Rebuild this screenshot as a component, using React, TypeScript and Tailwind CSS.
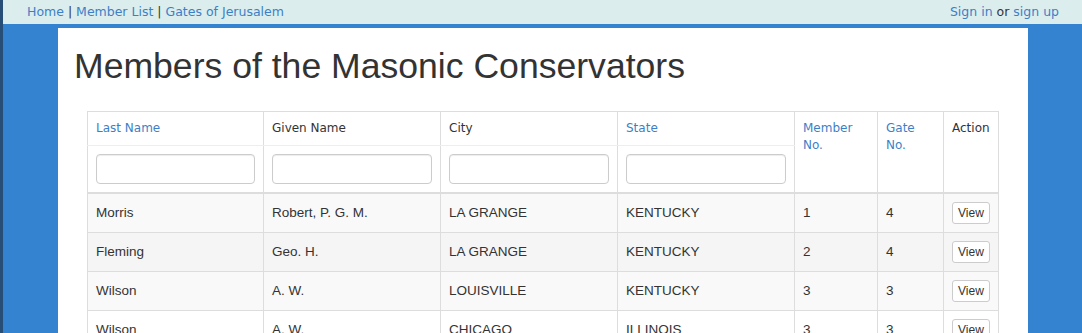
import React from 'react';

const members = [
  { last: 'Morris', given: 'Robert, P. G. M.', city: 'LA GRANGE', state: 'KENTUCKY', no: '1', gate: '4' },
  { last: 'Fleming', given: 'Geo. H.', city: 'LA GRANGE', state: 'KENTUCKY', no: '2', gate: '4' },
  { last: 'Wilson', given: 'A. W.', city: 'LOUISVILLE', state: 'KENTUCKY', no: '3', gate: '3' },
  { last: 'Wilson', given: 'A. W.', city: 'CHICAGO', state: 'ILLINOIS', no: '3', gate: '3' },
];

const rowBg = ['bg-[#f9f9f9]', 'bg-[#f5f5f5]', 'bg-[#f9f9f9]', 'bg-white'];

function FilterInput() {
  return <input type="text" className="block w-full h-[30px] rounded-[4px] border border-[#ccc] bg-white shadow-[inset_0_1px_1px_rgba(0,0,0,0.075)]" />;
}

export default function App() {
  return (
    <div className="min-h-[333px] bg-[#3483d0] border-l-[3px] border-[#274e76] font-['Liberation_Sans',Arial,sans-serif]">
      <nav className="h-6 bg-[#dbeded] flex items-center justify-between pl-6 pr-[23px] font-['DejaVu_Sans',sans-serif] text-[12.5px] text-[#333]">
        <div>
          <a className="text-[#3d7fc6]">Home</a> | <a className="text-[#3d7fc6]">Member List</a> |{' '}
          <a className="text-[#3d7fc6]">Gates of Jerusalem</a>
        </div>
        <div>
          <a className="text-[#3d7fc6]">Sign in</a> or <a className="text-[#3d7fc6]">sign up</a>
        </div>
      </nav>
      <main className="mt-1 ml-[55px] w-[970px] bg-white px-4 pb-6 text-[#333]">
        <h1 className="pt-[19px] text-[35.6px] leading-[1.1] text-[#333]">Members of the Masonic Conservators</h1>
        <table className="mt-[25px] ml-[13px] border-collapse border border-[#ddd] table-fixed w-[911px] text-[13.5px]">
          <colgroup>
            <col className="w-[176px]" />
            <col className="w-[177px]" />
            <col className="w-[177px]" />
            <col className="w-[177px]" />
            <col className="w-[83px]" />
            <col className="w-[66px]" />
            <col className="w-[55px]" />
          </colgroup>
          <thead className="font-['DejaVu_Sans',sans-serif] text-[12px] text-left align-top">
            <tr>
              <th className="border border-[#ddd] border-b-[#eee] px-2 pt-2 pb-[9px] font-normal text-[#3d7fc6] leading-[16px]">Last Name</th>
              <th className="border border-[#ddd] border-b-[#eee] px-2 pt-2 pb-[9px] font-normal leading-[16px]">Given Name</th>
              <th className="border border-[#ddd] border-b-[#eee] px-2 pt-2 pb-[9px] font-normal leading-[16px]">City</th>
              <th className="border border-[#ddd] border-b-[#eee] px-2 pt-2 pb-[9px] font-normal text-[#3d7fc6] leading-[16px]">State</th>
              <th rowSpan={2} className="border border-[#ddd] border-b-2 px-2 pt-2 font-normal text-[#3d7fc6] leading-[17px]">Member<br />No.</th>
              <th rowSpan={2} className="border border-[#ddd] border-b-2 px-2 pt-2 font-normal text-[#3d7fc6] leading-[17px]">Gate<br />No.</th>
              <th rowSpan={2} className="border border-[#ddd] border-b-2 px-2 pt-2 font-normal leading-[17px]">Action</th>
            </tr>
            <tr>
              {[0, 1, 2, 3].map((i) => (
                <th key={i} className="border border-[#ddd] border-t-[#eee] border-b-2 px-2 pt-2 pb-2 font-normal">
                  <FilterInput />
                </th>
              ))}
            </tr>
          </thead>
          <tbody>
            {members.map((m, i) => (
              <tr key={i} className={rowBg[i]}>
                <td className="border border-[#ddd] px-2 py-2 leading-[22px]">{m.last}</td>
                <td className="border border-[#ddd] px-2 py-2 leading-[22px]">{m.given}</td>
                <td className="border border-[#ddd] px-2 py-2 leading-[22px]">{m.city}</td>
                <td className="border border-[#ddd] px-2 py-2 leading-[22px]">{m.state}</td>
                <td className="border border-[#ddd] px-2 py-2 leading-[22px]">{m.no}</td>
                <td className="border border-[#ddd] px-2 py-2 leading-[22px]">{m.gate}</td>
                <td className="border border-[#ddd] px-2 py-2 leading-[22px]">
                  <button className="block h-[22px] px-[5px] rounded-[3px] border border-[#ccc] bg-white text-[12px] leading-[20px] text-[#333]">View</button>
                </td>
              </tr>
            ))}
          </tbody>
        </table>
      </main>
    </div>
  );
}
